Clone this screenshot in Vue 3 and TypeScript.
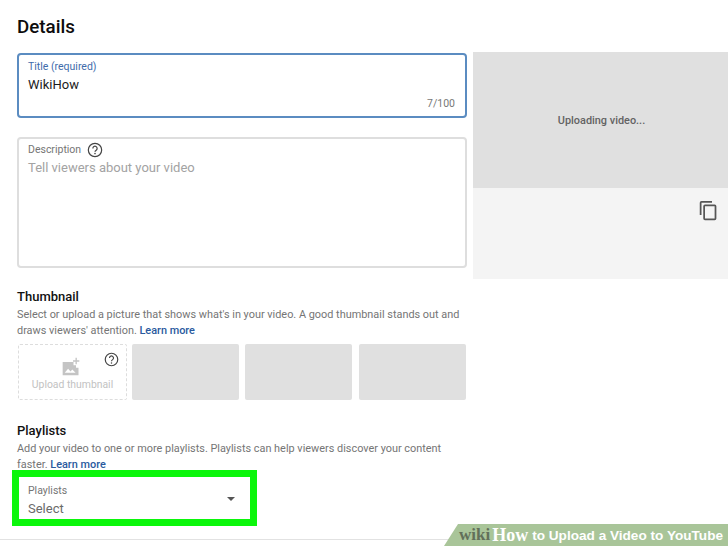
<script setup lang="ts">
const thumbs: number[] = [1, 2, 3]
</script>

<template>
  <div class="page">
    <div class="columns">
      <main class="left">
        <h1 class="title">Details</h1>

        <div class="field focused">
          <div class="label blue">Title (required)</div>
          <div class="value">WikiHow</div>
          <div class="count">7/100</div>
        </div>

        <div class="field desc">
          <div class="label">
            Description
            <svg class="help" viewBox="0 0 24 24" width="16" height="16">
              <circle cx="12" cy="12" r="10" fill="none" stroke="#444" stroke-width="1.8" />
              <path d="M8.8 9.6a3.2 3.2 0 1 1 5 2.6c-1 .7-1.8 1.3-1.8 2.6" fill="none" stroke="#444" stroke-width="1.8" />
              <circle cx="12" cy="17.4" r="1.2" fill="#444" />
            </svg>
          </div>
          <div class="placeholder">Tell viewers about your video</div>
        </div>

        <section class="thumb-section">
          <h2 class="heading">Thumbnail</h2>
          <p class="text">
            Select or upload a picture that shows what's in your video. A good thumbnail stands out and
            draws viewers' attention. <a class="link">Learn more</a>
          </p>
          <div class="thumbs">
            <div class="upload">
              <svg class="upload-icon" viewBox="0 0 24 24" width="20" height="20">
                <path d="M2 6h13v4h3v3h3v9H2z" fill="#c4c4c4" />
                <path d="M4.5 19l4-5 3 3.4 2-2.4 4 4z" fill="#fff" />
                <path d="M19 1v3h3v1.6h-3v3h-1.6v-3h-3V4h3V1z" fill="#c4c4c4" />
              </svg>
              <span class="upload-text">Upload thumbnail</span>
              <svg class="upload-help" viewBox="0 0 24 24" width="15" height="15">
                <circle cx="12" cy="12" r="10" fill="none" stroke="#444" stroke-width="1.9" />
                <path d="M8.8 9.6a3.2 3.2 0 1 1 5 2.6c-1 .7-1.8 1.3-1.8 2.6" fill="none" stroke="#444" stroke-width="1.9" />
                <circle cx="12" cy="17.4" r="1.2" fill="#444" />
              </svg>
            </div>
            <div v-for="t in thumbs" :key="t" class="thumb"></div>
          </div>
        </section>

        <section class="play-section">
          <h2 class="heading">Playlists</h2>
          <p class="text">
            Add your video to one or more playlists. Playlists can help viewers discover your content
            faster. <a class="link">Learn more</a>
          </p>
          <div class="select">
            <div>
              <div class="label">Playlists</div>
              <div class="select-value">Select</div>
            </div>
            <span class="caret"></span>
          </div>
        </section>
      </main>

      <aside class="right">
        <div class="preview">Uploading video...</div>
        <div class="meta">
          <svg viewBox="0 0 24 24" width="21" height="21">
            <path d="M16 1H4a2 2 0 0 0-2 2v14h2V3h12zm3 4H8a2 2 0 0 0-2 2v14a2 2 0 0 0 2 2h11a2 2 0 0 0 2-2V7a2 2 0 0 0-2-2zm0 16H8V7h11z" fill="#555" />
          </svg>
        </div>
      </aside>
    </div>

    <div class="rule"></div>

    <div class="banner">
      <span class="wiki">wiki</span><span class="how">How</span>
      <span class="caption">to Upload a Video to YouTube</span>
    </div>
  </div>
</template>

<style scoped>
.page {
  position: relative;
  width: 728px;
  height: 546px;
  overflow: hidden;
  background: #fff;
  font-family: Roboto, "Liberation Sans", sans-serif;
  color: #0d0d0d;
}
.columns {
  display: flex;
  align-items: flex-start;
  gap: 6px;
  padding-left: 17px;
}
.left {
  width: 450px;
  flex: none;
}
.title {
  margin: 0;
  height: 53px;
  padding-top: 15px;
  box-sizing: border-box;
  font-size: 18.8px;
  line-height: 24px;
  font-weight: 500;
}
.field {
  box-sizing: border-box;
  border: 1px solid #d8d8d8;
  border-radius: 4px;
  padding: 0 10px;
  position: relative;
}
.focused {
  height: 65px;
  border: 2px solid #5b8cc1;
  padding: 5px 9px 0;
}
.desc {
  height: 131px;
  margin-top: 19px;
  border: 2px solid #dedede;
  padding: 3px 9px 0;
}
.label {
  font-size: 10.5px;
  line-height: 14px;
  color: #757575;
  display: flex;
  align-items: center;
  gap: 6px;
}
.label.blue {
  color: #3f6cab;
}
.value {
  margin-top: 2px;
  font-size: 13px;
  line-height: 18px;
  color: #1c1c1c;
}
.count {
  position: absolute;
  right: 10px;
  bottom: 5px;
  font-size: 10.5px;
  line-height: 14px;
  color: #777;
}
.placeholder {
  margin-top: 1px;
  font-size: 13px;
  line-height: 18px;
  color: #a3a3a3;
}
.thumb-section {
  margin-top: 20px;
}
.heading {
  margin: 0;
  font-size: 13px;
  line-height: 17px;
  font-weight: 500;
  color: #111;
}
.text {
  margin: 2px 0 0;
  font-size: 10.9px;
  line-height: 16px;
  color: #757575;
  width: 450px;
}
.link {
  color: #2a5a9e;
  font-weight: 500;
}
.thumbs {
  display: flex;
  margin-top: 5px;
  height: 56px;
}
.upload {
  position: relative;
  box-sizing: border-box;
  width: 109px;
  margin-left: 1px;
  margin-right: 5px;
  border: 1px dashed #ddd;
  border-radius: 2px;
  display: flex;
  flex-direction: column;
  align-items: center;
  padding-top: 12px;
}
.upload-icon {
  margin-left: -3px;
}
.upload-text {
  margin-top: 1px;
  font-size: 10.4px;
  line-height: 13px;
  color: #c2c2c2;
  white-space: nowrap;
}
.upload-help {
  position: absolute;
  right: 7px;
  top: 7px;
}
.thumb {
  width: 107px;
  background: #e0e0e0;
  border-radius: 2px;
  margin-right: 6px;
}
.thumb:nth-child(3) {
  margin-right: 7px;
}
.thumb:last-child {
  margin-right: 0;
}
.play-section {
  margin-top: 22px;
}
.select {
  box-sizing: border-box;
  width: 245px;
  height: 56px;
  margin: -3px 0 0 -5px;
  border: 7px solid #0bf60b;
  padding: 7px 15.5px 0 9px;
  display: flex;
  align-items: center;
  justify-content: space-between;
  background: #fff;
}
.select > div {
  align-self: flex-start;
}
.select-value {
  margin-top: 2px;
  font-size: 13px;
  line-height: 18px;
  color: #6a6a6a;
}
.caret {
  width: 0;
  height: 0;
  border-left: 4.5px solid transparent;
  border-right: 4.5px solid transparent;
  border-top: 4.5px solid #555;
  margin-top: -5px;
}
.right {
  flex: 1;
  margin-top: 52px;
  height: 227px;
  display: flex;
  flex-direction: column;
}
.preview {
  height: 136px;
  background: #e0e0e0;
  display: flex;
  align-items: center;
  justify-content: center;
  font-size: 10.9px;
  font-weight: 500;
  color: #636363;
  padding-left: 2px;
  box-sizing: border-box;
}
.meta {
  flex: 1;
  background: #f4f4f4;
  display: flex;
  justify-content: flex-end;
  align-items: flex-start;
  padding: 12px 9px 0 0;
}
.rule {
  position: absolute;
  left: 0;
  right: 0;
  top: 539px;
  height: 1px;
  background: #e2e2e2;
}
.banner {
  position: absolute;
  right: 0;
  top: 524px;
  width: 284px;
  height: 22px;
  background: #a9c599;
  clip-path: polygon(14px 0, 100% 0, 100% 100%, 0 100%);
  box-sizing: border-box;
  padding-left: 15px;
  display: flex;
  align-items: center;
  font-weight: 700;
  white-space: nowrap;
  color: #fff;
}
.wiki {
  font-family: "Liberation Serif", serif;
  font-size: 17px;
  color: #62705a;
}
.how {
  margin-left: 2px;
  font-family: "Liberation Serif", serif;
  font-size: 18px;
  color: #fff;
}
.caption {
  margin-left: 4px;
  font-family: "Liberation Sans", sans-serif;
  font-size: 13.6px;
  color: #fff;
}
</style>
